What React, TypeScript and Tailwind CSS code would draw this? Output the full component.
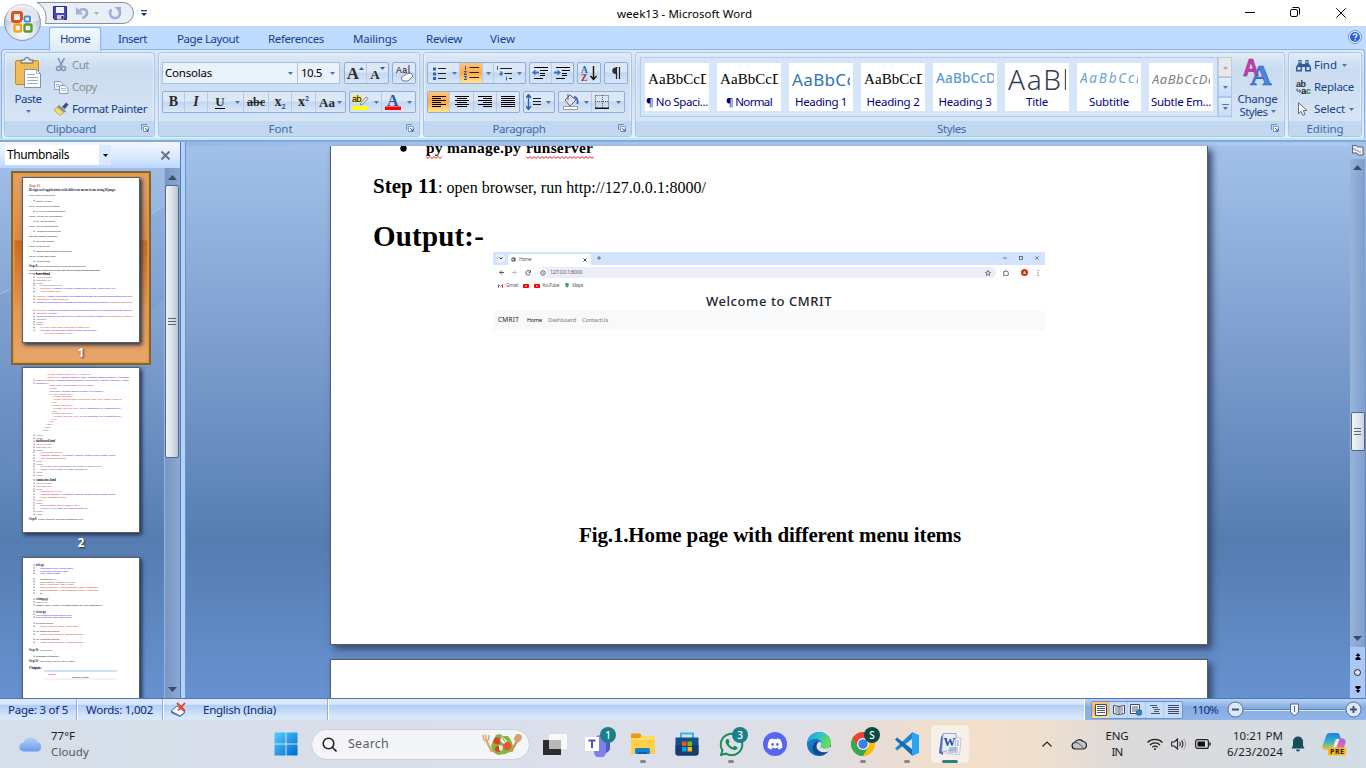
import React, { useLayoutEffect, useRef, useState } from "react";
import { FaDiscord, FaWhatsapp } from "react-icons/fa";

/* ---------- helpers ---------- */

// Text tracked so that it fills a given width.
function T({ w, className = "", children }: { w?: number; className?: string; children: string }) {
  const ref = useRef<HTMLSpanElement>(null);
  const [ls, setLs] = useState(0);
  useLayoutEffect(() => {
    if (w && ref.current) {
      const natural = ref.current.getBoundingClientRect().width;
      setLs((w - natural) / children.length);
    }
  }, []);
  return (
    <span ref={ref} className={"inline-block whitespace-pre " + className} style={{ letterSpacing: ls }}>
      {children}
    </span>
  );
}

function Ic({ w, h, className = "", children }: { w: number; h: number; className?: string; children: React.ReactNode }) {
  return (
    <svg width={w} height={h} viewBox={`0 0 ${w} ${h}`} className={"block shrink-0 " + className}>
      {children}
    </svg>
  );
}

const Arrow = ({ c = "#4a78b8", className = "" }: { c?: string; className?: string }) => (
  <Ic w={5} h={3} className={className}>
    <path d="M0 0h5L2.5 3z" fill={c} />
  </Ic>
);

/* ---------- title bar and tabs ---------- */

function Orb() {
  return (
    <svg width="38" height="38" viewBox="0 0 38 38" className="absolute left-[3px] top-[3px] z-10">
      <defs>
        <radialGradient id="orb" cx="50%" cy="75%" r="75%">
          <stop offset="0" stopColor="#ffffff" />
          <stop offset=".45" stopColor="#dfe6ef" />
          <stop offset=".8" stopColor="#b4c2d6" />
          <stop offset="1" stopColor="#e8eef6" />
        </radialGradient>
      </defs>
      <circle cx="19.5" cy="19.5" r="18" fill="url(#orb)" stroke="#8796ab" />
      <path d="M3 17a16.5 16.5 0 0 1 33 0c-8 3-25 3-33 0z" fill="#fff" opacity=".55" />
      <g fill="none" strokeLinejoin="round">
        <rect x="9.5" y="9.5" width="9" height="9" rx="1.5" stroke="#e0501c" strokeWidth="3" />
        <rect x="21.5" y="13.5" width="5.5" height="5" rx="1" stroke="#3f8fdc" strokeWidth="2" />
        <rect x="11.5" y="21.5" width="6.5" height="7" rx="1" stroke="#f2a51c" strokeWidth="2.4" />
        <rect x="21.5" y="21.5" width="7" height="7" rx="1" stroke="#5c9e2e" strokeWidth="2.4" />
      </g>
      <path d="M17 19.5h5M19.5 17v5" stroke="#fff" strokeWidth="1" />
    </svg>
  );
}

function TitleBar() {
  return (
    <div className="relative flex h-[26px] shrink-0 items-start bg-white">
      <svg width="100" height="24" viewBox="0 0 100 24" className="absolute left-[36px] top-[1px]">
        <path d="M1 1.5H87a10.500 10.500 0 0 1 0 21H9.500C11.500 12 8 5 1 1.500z" fill="#e9eff7" stroke="#8b9098" />
      </svg>
      <div className="relative flex h-[26px] items-center pl-[53px]">
        <Ic w={14} h={14}>
          <path d="M.5.5h13v13h-12l-1-1z" fill="#4a46b4" stroke="#2b2a80" />
          <path d="M3 1h8v6H3z" fill="#f2f4fb" />
          <path d="M4 9h7v4.500H4z" fill="#c9cbe6" />
          <path d="M8.500 10h2v3h-2z" fill="#25236e" />
        </Ic>
        <Ic w={14} h={14} className="ml-[8px]">
          <path d="M3.500 6c3-4.500 8.500-3 8.500 .8 0 2.500-2 4.200-4.500 5.200" fill="none" stroke="#9fb2d2" strokeWidth="2.600" />
          <path d="M1 1v7.500h7.500z" fill="#9fb2d2" />
        </Ic>
        <Arrow c="#a9b0ba" className="ml-[5px]" />
        <Ic w={14} h={14} className="ml-[9px]">
          <path d="M3.500 3.500a5 5 0 1 0 7 0" fill="none" stroke="#9fb2d2" strokeWidth="2.600" />
          <path d="M6.500 1h6.500v6.500z" fill="#9fb2d2" />
        </Ic>
        <Ic w={6} h={7} className="ml-[19px]">
          <path d="M0 0h6v1.200H0zM0 3h6L3 6z" fill="#1f3764" />
        </Ic>
      </div>
      <div className="ml-auto flex h-[26px] items-center pr-[20px]">
        <Ic w={10} h={10}><path d="M0 4.500h10" stroke="#000" /></Ic>
        <Ic w={10} h={10} className="ml-[35px] mt-[-2px]">
          <rect x=".5" y="2.500" width="7" height="7" rx="1.500" fill="none" stroke="#000" />
          <path d="M2.500.5h5.500a1.500 1.500 0 0 1 1.500 1.500v5.500" fill="none" stroke="#000" />
        </Ic>
        <Ic w={10} h={10} className="ml-[36px] mt-[-1px]"><path d="M.3.3l9.400 9.400M9.700.3L.3 9.700" stroke="#000" /></Ic>
      </div>
      <div className="absolute left-[617px] top-[5px] text-[11.500px] leading-[17px] text-black">
        <T w={135}>week13 - Microsoft Word</T>
      </div>
    </div>
  );
}

const TABS: [string, number, number][] = [
  ["Insert", 29, 17],
  ["Page Layout", 62, 30],
  ["References", 56, 29],
  ["Mailings", 44, 29],
  ["Review", 36, 29],
  ["View", 25, 28],
];

function Tabs() {
  return (
    <div className="flex h-[23px] shrink-0 items-start bg-[#bfdbff] text-[11.500px] leading-[22px] text-[#15428b]">
      <div className="relative z-10 ml-[49px] mt-[1px] flex h-[24px] w-[52px] justify-center rounded-t-[3px] border border-b-0 border-[#8fb6ea] bg-gradient-to-b from-[#f4f9ff] to-[#dfebf8] shadow-[0_0_2px_#9ad6ff]">
        <T w={30}>Home</T>
      </div>
      {TABS.map(([t, w, ml]) => (
        <div key={t} className="flex pt-[2px]" style={{ marginLeft: ml }}>
          <T w={w}>{t}</T>
        </div>
      ))}
      <Ic w={14} h={14} className="ml-auto mr-[4px] mt-[4px]">
        <circle cx="7" cy="7" r="6.500" fill="#e9f1fc" stroke="#6f93cf" />
        <circle cx="7" cy="7" r="5" fill="#2a62d8" />
        <path d="M5.200 5.600c0-2.400 3.700-2.300 3.700-.2 0 1.300-1.700 1.400-1.700 2.800M7.200 9.200v1.300" fill="none" stroke="#fff" strokeWidth="1.300" />
      </Ic>
    </div>
  );
}

/* ---------- ribbon ---------- */

function Group({ className, title, tw, launcher = true, children }: { className: string; title: string; tw: number; launcher?: boolean; children: React.ReactNode }) {
  return (
    <div className={"flex h-[85px] shrink-0 flex-col overflow-hidden rounded-[3px] border border-[#a9c6e8] bg-gradient-to-b from-[#dfeaf6] via-[#cbdcf0] via-20% to-[#d9e7f6] shadow-[inset_0_0_0_1px_#e6f0fa] " + className}>
      <div className="flex h-[68px]">{children}</div>
      <div className={"relative flex h-[15px] justify-center bg-[#c1d8f0] text-[11.500px] leading-[16px] text-[#3e6aaa] " + (launcher ? "pr-[17px]" : "")}>
        <T w={tw}>{title}</T>
        {launcher && (
          <Ic w={8} h={8} className="absolute right-[5px] top-[3px]">
            <path d="M.5 6V.5H6" fill="none" stroke="#6f8fbd" />
            <path d="M2.500 2.500h5v5h-5z" fill="#fff" stroke="#7d9cc6" />
            <path d="M4 4l3 3M7 4.500V7H4.500" stroke="#3d6aa8" fill="none" />
          </Ic>
        )}
      </div>
    </div>
  );
}

const Bar = ({ className, children }: { className: string; children: React.ReactNode }) => (
  <div className={"flex h-[22px] overflow-hidden rounded-[2px] border border-[#8eafda] bg-gradient-to-b from-[#dce8f6] from-45% via-[#c4d7ef] via-50% to-[#d9e7f7] " + className}>{children}</div>
);

const Cell = ({ className, on, sep = true, children }: { className: string; on?: boolean; sep?: boolean; children: React.ReactNode }) => (
  <div className={"flex h-full shrink-0 items-center justify-center " + (sep ? "border-r border-[#b5cbe8] " : "") + (on ? "bg-gradient-to-b from-[#fdc57c] via-[#fda848] to-[#ffe48f] " : "") + className}>
    {children}
  </div>
);

const Lines = ({ rows }: { rows: [number, number][] }) => (
  <Ic w={14} h={12}>
    {rows.map(([x, w], i) => (
      <rect key={i} x={x} y={i * 2} width={w} height="1" fill="#000" />
    ))}
  </Ic>
);

function Clipboard() {
  return (
    <Group className="w-[151px]" title="Clipboard" tw={50}>
      <div className="ml-[5px] flex w-[36px] flex-col items-center pt-[4px]">
        <Ic w={26} h={31}>
          <rect x=".5" y="3.500" width="23" height="24" rx="1.500" fill="#f0bb55" stroke="#c58a2c" />
          <path d="M6 6V3h3.500a2.500 2.500 0 0 1 5 0H18v3z" fill="#e8e8ea" stroke="#5e6069" />
          <path d="M9.500 12.500h12l4 4v14h-16z" fill="#fff" stroke="#7e93b4" />
          <path d="M21.500 12.500v4h4M12 17.500h8M12 20.500h11M12 23.500h11M12 26.500h11" fill="none" stroke="#9aadc9" />
        </Ic>
        <T w={27} className="mt-[3px] text-[11.500px] leading-[16px]">Paste</T>
        <Arrow className="mt-[3px]" />
      </div>
      <div className="ml-[8px] flex flex-col pt-[1px] text-[11.500px]">
        <div className="flex h-[22px] items-center text-[#8d8d8d]">
          <Ic w={15} h={14}>
            <path d="M4 0l4 8M10.500 0L6 8" stroke="#8497b5" strokeWidth="1.600" fill="none" />
            <circle cx="4.500" cy="10.500" r="2" fill="none" stroke="#8497b5" strokeWidth="1.500" />
            <circle cx="9.500" cy="10.500" r="2" fill="none" stroke="#8497b5" strokeWidth="1.500" />
          </Ic>
          <T w={17} className="ml-[3px]">Cut</T>
        </div>
        <div className="flex h-[22px] items-center text-[#8d8d8d]">
          <Ic w={15} h={13}>
            <path d="M.5.500h6l2 2v6h-8z" fill="#eef3fa" stroke="#8d9fbf" />
            <path d="M5.500 4.500h6l2.500 2.500v5.500H5.500z" fill="#f5f8fc" stroke="#8d9fbf" />
            <path d="M2 3.500h3M2 5.500h3M7 7.500h5M7 9.500h5" stroke="#a9b8d2" />
          </Ic>
          <T w={25} className="ml-[3px]">Copy</T>
        </div>
        <div className="flex h-[22px] items-center text-[#15428b]">
          <Ic w={15} h={14}>
            <path d="M8 5l4-4.500 2.500 2L11 7z" fill="#3c4f80" />
            <path d="M5 3.500L11.500 9 10 10.500 3.500 5z" fill="#9099b0" stroke="#545e7e" strokeWidth=".6" />
            <path d="M3.500 5L10 10.500 6 13.500 0 8z" fill="#f5dc70" stroke="#a98d30" strokeWidth=".7" />
          </Ic>
          <T w={75} className="ml-[3px]">Format Painter</T>
        </div>
      </div>
    </Group>
  );
}

const Serif = "font-['Liberation_Serif',serif] font-bold text-[#2a2a2a] leading-none ";

function FontGroup() {
  return (
    <Group className="w-[262px]" title="Font" tw={24}>
      <div className="flex flex-col gap-[7px] pl-[3px] pt-[9px]">
        <div className="flex h-[22px] text-[11.500px] text-black">
          <div className="flex w-[136px] items-center border border-[#abc1de] bg-[#eaf2fb] pl-[2px] pr-[4px]">
            <T w={47}>Consolas</T>
            <Arrow className="ml-auto" />
          </div>
          <div className="flex w-[42px] items-center border border-l-0 border-[#abc1de] bg-[#eaf2fb] pl-[3px] pr-[4px]">
            <T w={21}>10.5</T>
            <Arrow className="ml-auto" />
          </div>
          <Bar className="ml-[4px] w-[45px]">
            <Cell className="w-[22px]">
              <span className={Serif + "text-[17px]"}>A</span>
              <Ic w={5} h={3} className="mb-[10px]"><path d="M0 3h5L2.500 0z" fill="#2d5fa8" /></Ic>
            </Cell>
            <Cell className="w-[21px]" sep={false}>
              <span className={Serif + "mt-[3px] text-[13px]"}>A</span>
              <Arrow c="#2d5fa8" className="mb-[10px]" />
            </Cell>
          </Bar>
          <Bar className="ml-[3px] w-[24px]">
            <Cell className="w-[22px]" sep={false}>
              <Ic w={17} h={17}>
                <text x="0" y="7.500" fontSize="8.500" fontFamily="Liberation Sans, sans-serif" fill="#000" textLength="11">Aa</text>
                <path d="M13 0v9" stroke="#333" />
                <path d="M10 9l5-1 2 3-5 5H7l-2-3z" fill="#fff" stroke="#6b7391" />
              </Ic>
            </Cell>
          </Bar>
        </div>
        <div className="flex h-[22px]">
          <Bar className="w-[184px]">
            <Cell className="w-[22px]"><span className={Serif + "text-[14px]"}>B</span></Cell>
            <Cell className="w-[23px]"><span className={Serif + "text-[14px] italic"}>I</span></Cell>
            <Cell className="w-[24px]" sep={false}><span className={Serif + "border-b border-black text-[13px]"}>U</span></Cell>
            <Cell className="w-[12px]"><Arrow /></Cell>
            <Cell className="w-[25px]"><span className={Serif + "text-[12px] line-through"}>abc</span></Cell>
            <Cell className="w-[23px]">
              <span className={Serif + "text-[14px]"}>x</span>
              <span className="mt-[9px] text-[7px] font-bold leading-none text-[#2d5fa8]">2</span>
            </Cell>
            <Cell className="w-[24px]">
              <span className={Serif + "text-[14px]"}>x</span>
              <span className="mb-[8px] text-[7px] font-bold leading-none text-[#2d5fa8]">2</span>
            </Cell>
            <Cell className="w-[29px] gap-[2px]" sep={false}>
              <span className={Serif + "text-[13px]"}>Aa</span>
              <Arrow />
            </Cell>
          </Bar>
          <Bar className="ml-[3px] w-[67px]">
            <Cell className="w-[21px]" sep={false}>
              <Ic w={17} h={17}>
                <path d="M0 1h10v8H0z" fill="#ffe97a" />
                <text x="0" y="8" fontSize="9" fontFamily="Liberation Sans, sans-serif" fill="#000" textLength="9.500">ab</text>
                <path d="M9 9l5-6 2 1.500L11 10l-3 .8z" fill="#f2ede2" stroke="#777" strokeWidth=".8" />
                <path d="M0 12.500h16V16H0z" fill="#ff0" />
              </Ic>
            </Cell>
            <Cell className="w-[11px]"><Arrow /></Cell>
            <Cell className="w-[22px]" sep={false}>
              <Ic w={16} h={18}>
                <text x="2" y="12.500" fontSize="16" fontWeight="bold" fontFamily="Liberation Serif, serif" fill="#31549a">A</text>
                <path d="M0 13.500h16V17H0z" fill="#f00" />
              </Ic>
            </Cell>
            <Cell className="w-[11px]" sep={false}><Arrow /></Cell>
          </Bar>
        </div>
      </div>
    </Group>
  );
}

const Indent = ({ out }: { out?: boolean }) => (
  <Ic w={17} h={14}>
    <path d="M2 1.500h14M8 4.500h8M8 7.500h5M8 9.500h5M2 12.500h9" stroke="#000" strokeWidth="1.200" />
    <path d={out ? "M0 6.500l3.500-3v2H7v2H3.500v2z" : "M7 6.500l-3.500-3v2H0v2h3.500v2z"} fill="#3a6fc4" />
  </Ic>
);

function Paragraph() {
  return (
    <Group className="w-[209px]" title="Paragraph" tw={53}>
      <div className="flex flex-col gap-[7px] pl-[3px] pt-[9px]">
        <div className="flex h-[22px]">
          <Bar className="w-[99px]">
            <Cell className="w-[22px]" sep={false}>
              <Ic w={13} h={13}>
                <path d="M0 .500h3v3H0zM0 5.500h3v3H0zM0 10h3v3H0z" fill="#2d5fb4" />
                <path d="M5 1.500h8M5 6.500h8M5 11.500h8" stroke="#222" />
              </Ic>
            </Cell>
            <Cell className="w-[10px]"><Arrow /></Cell>
            <Cell className="w-[23px]" on>
              <Ic w={15} h={14}>
                <path d="M1.500 0v4M0 5.500h2.500L0 8.500h3M0 10.500h2.500l-1 1.500 1 1.500H0" fill="none" stroke="#2d4f94" />
                <path d="M5.500 1.500h9.500M5.500 6.500h9.500M5.500 11.500h9.500" stroke="#222" />
              </Ic>
            </Cell>
            <Cell className="w-[11px]"><Arrow /></Cell>
            <Cell className="w-[20px]" sep={false}>
              <Ic w={17} h={15}>
                <path d="M1.500 0v4M4 6h2v3H4v-1.500h2M10.500 11v3.500" fill="none" stroke="#2d5fb4" />
                <path d="M4 2.500h12M8.500 7.500H16M13 12.500h3" stroke="#222" />
              </Ic>
            </Cell>
            <Cell className="w-[11px]" sep={false}><Arrow /></Cell>
          </Bar>
          <Bar className="ml-[3px] w-[45px]">
            <Cell className="w-[22px]"><Indent out /></Cell>
            <Cell className="w-[21px]" sep={false}><Indent /></Cell>
          </Bar>
          <Bar className="ml-[3px] w-[24px]">
            <Cell className="w-[22px]" sep={false}>
              <Ic w={16} h={16}>
                <text x="0" y="7.500" fontSize="9.500" fontWeight="bold" fontFamily="Liberation Serif, serif" fill="#2d5fb4">A</text>
                <text x="0" y="15.500" fontSize="9.500" fontWeight="bold" fontFamily="Liberation Serif, serif" fill="#a02c3c">Z</text>
                <path d="M12.500 1v13M9.500 11l3 3.500 3-3.500" fill="none" stroke="#111" strokeWidth="1.400" />
              </Ic>
            </Cell>
          </Bar>
          <Bar className="ml-[3px] w-[24px]">
            <Cell className="w-[22px]" sep={false}>
              <Ic w={10} h={12}>
                <path d="M10 .5H4a3.300 3.300 0 0 0 0 6.500h1V0z" fill="#333" />
                <path d="M5.500 0v12M8.500 0v12" stroke="#222" strokeWidth="1.200" />
              </Ic>
            </Cell>
          </Bar>
        </div>
        <div className="flex h-[22px]">
          <Bar className="w-[93px]">
            <Cell className="w-[22px]" on><Lines rows={[[0, 14], [0, 9], [0, 14], [0, 9], [0, 14], [0, 9]]} /></Cell>
            <Cell className="w-[24px]"><Lines rows={[[0, 14], [2, 10], [0, 14], [2, 10], [0, 14], [2, 10]]} /></Cell>
            <Cell className="w-[23px]"><Lines rows={[[0, 14], [5, 9], [0, 14], [5, 9], [0, 14], [5, 9]]} /></Cell>
            <Cell className="w-[22px]" sep={false}><Lines rows={[[0, 14], [0, 14], [0, 14], [0, 14], [0, 14], [0, 14]]} /></Cell>
          </Bar>
          <Bar className="ml-[3px] w-[32px]">
            <Cell className="w-[18px]" sep={false}>
              <Ic w={15} h={16}>
                <path d="M2.500 1v14M0 4l2.500-3.500L5 4M0 12l2.500 3.500L5 12" fill="none" stroke="#2d5fb4" strokeWidth="1.400" />
                <path d="M7 4.500h8M7 7.500h8M7 10.500h8" stroke="#222" />
              </Ic>
            </Cell>
            <Cell className="w-[12px]" sep={false}><Arrow /></Cell>
          </Bar>
          <Bar className="ml-[3px] w-[67px]">
            <Cell className="w-[23px]" sep={false}>
              <Ic w={17} h={16}>
                <path d="M3 6l5-5 6 5-6 6z" fill="#dfe6f2" stroke="#5b6680" />
                <path d="M12 3c3 0 4 3 3.500 7" fill="none" stroke="#2d5fb4" strokeWidth="1.800" />
                <path d="M6 0v6" stroke="#555" />
                <path d="M1.500 12.500h14v3h-14z" fill="#fff" stroke="#999" />
              </Ic>
            </Cell>
            <Cell className="w-[10px]"><Arrow /></Cell>
            <Cell className="w-[20px]" sep={false}>
              <Ic w={14} h={14}>
                <path d="M.5.5h13v13M.5.5v13M7.500 0v13M0 6.500h13" fill="none" stroke="#555" strokeDasharray="1 1" />
                <path d="M0 13.300h14" stroke="#111" strokeWidth="1.400" />
              </Ic>
            </Cell>
            <Cell className="w-[12px]" sep={false}><Arrow /></Cell>
          </Bar>
        </div>
      </div>
    </Group>
  );
}

const STYLES: { s: string; sw: number; l: string; lw: number; c: string }[] = [
  { s: "AaBbCcD", sw: 63, l: "¶ No Spaci...", lw: 62, c: "font-['Liberation_Serif',serif] text-[15px] text-black" },
  { s: "AaBbCcD", sw: 63, l: "¶ Normal", lw: 46, c: "font-['Liberation_Serif',serif] text-[15px] text-black" },
  { s: "AaBbCc", sw: 63, l: "Heading 1", lw: 52, c: "text-[17px] text-[#2e74b5]" },
  { s: "AaBbCcD", sw: 63, l: "Heading 2", lw: 53, c: "font-['Liberation_Serif',serif] text-[15px] text-black" },
  { s: "AaBbCcD", sw: 60, l: "Heading 3", lw: 53, c: "text-[13.500px] font-medium text-[#5b9bd5]" },
  { s: "AaBb", sw: 73, l: "Title", lw: 22, c: "text-[28px] font-light text-[#323e4f]" },
  { s: "AaBbCcL", sw: 64, l: "Subtitle", lw: 40, c: "text-[13.500px] italic text-[#6aa4d9]" },
  { s: "AaBbCcDd", sw: 64, l: "Subtle Em...", lw: 60, c: "text-[13px] italic text-[#808080]" },
];

function StylesGroup() {
  return (
    <Group className="w-[650px]" title="Styles" tw={29}>
      <div className="ml-[4px] mt-[4px] flex h-[60px] w-[578px] gap-[8px] border border-[#b1cbea] bg-[#d4e6f8] pl-[4px] pt-[5px]">
        {STYLES.map((x) => (
          <div key={x.l} className="flex h-[48px] w-[64px] shrink-0 flex-col bg-white">
            <div className={"ml-[3px] mt-[2px] flex h-[28px] w-[58px] items-center overflow-hidden leading-none " + x.c}>
              <T w={x.sw}>{x.s}</T>
            </div>
            <div className="flex justify-center pt-[1px] text-[11.500px] leading-[16px] text-[#000080]">
              <T w={x.lw}>{x.l}</T>
            </div>
          </div>
        ))}
      </div>
      <div className="mt-[4px] flex h-[60px] w-[14px] flex-col">
        <div className="flex h-[20px] items-center justify-center border border-[#ccc] bg-[#e7e9ec]"><Ic w={5} h={3}><path d="M0 3h5L2.500 0z" fill="#a8acb2" /></Ic></div>
        <div className="flex h-[20px] items-center justify-center border border-[#aac6ea] bg-gradient-to-b from-[#e2eefc] to-[#c6dcf6]"><Arrow /></div>
        <div className="flex h-[20px] flex-col items-center justify-center gap-[2px] border border-[#aac6ea] bg-gradient-to-b from-[#e2eefc] to-[#c6dcf6]">
          <Ic w={7} h={1}><path d="M0 0h7v1H0z" fill="#4a78b8" /></Ic>
          <Arrow />
        </div>
      </div>
      <div className="flex w-[51px] flex-col items-center pt-[5px] text-[11.500px] leading-[13px] text-[#15428b]">
        <Ic w={30} h={28}>
          <text x="0" y="17.500" fontSize="24" fontWeight="bold" fontFamily="Liberation Sans, sans-serif" fill="#c040a8" stroke="#8c2080" strokeWidth=".5" textLength="16" lengthAdjust="spacingAndGlyphs">A</text>
          <text x="7" y="27" fontSize="30" fontWeight="bold" fontFamily="Liberation Serif, serif" fill="#4a86dc" stroke="#2c59a8" strokeWidth=".6">A</text>
        </Ic>
        <T w={40} className="mt-[6px]">Change</T>
        <div className="flex items-center gap-[3px]">
          <T w={28}>Styles</T>
          <Arrow />
        </div>
      </div>
    </Group>
  );
}

function Editing() {
  return (
    <Group className="w-[74px]" title="Editing" tw={37} launcher={false}>
      <div className="flex flex-col pl-[7px] pt-[1px] text-[11.500px] text-[#15428b]">
        <div className="flex h-[22px] items-center">
          <Ic w={15} h={13}>
            <path d="M2.500 1h3v3l1 1h2l1-1V1h3v3l2.500 4v4.500H9V8H6v4.500H0V8l2.500-4z" fill="#34599c" />
            <path d="M1.500 8h3v3h-3zM10.500 8h3v3h-3zM3.500 2h1v2h-1zM10.500 2h1v2h-1z" fill="#cfdcf2" />
          </Ic>
          <T w={23} className="ml-[3px]">Find</T>
          <Arrow className="ml-[5px]" />
        </div>
        <div className="flex h-[22px] items-center">
          <Ic w={15} h={15}>
            <text x="0" y="7" fontSize="9" fontWeight="bold" fontFamily="Liberation Sans, sans-serif" fill="#333" textLength="10">ab</text>
            <path d="M1 8.500V11h3M3 9.500L4.800 11 3 12.500" fill="none" stroke="#2d5fb4" />
            <text x="5" y="14" fontSize="9.500" fontWeight="bold" fontFamily="Liberation Sans, sans-serif" fill="#222" textLength="10"><tspan>a</tspan><tspan fill="#1f8a2c">c</tspan></text>
          </Ic>
          <T w={40} className="ml-[3px]">Replace</T>
        </div>
        <div className="flex h-[22px] items-center">
          <Ic w={15} h={14}><path d="M2.500.8v11l2.700-2.500 1.800 4 2-.9-1.700-3.900H11z" fill="#fff" stroke="#5f6b84" /></Ic>
          <T w={31} className="ml-[3px]">Select</T>
          <Arrow className="ml-[4px]" />
        </div>
      </div>
    </Group>
  );
}

/* ---------- thumbnails ---------- */

type Seg = [number, number, number, string, string, number?]; // x1, x2, baseline y, text, colour, bold
const K = "#444", P = "#5a46f0", R = "#e0504c", M = "#a85a6c";

const PAGE1: Seg[] = [
  [29, 40, 186.5, "Step-13", "#b45a48", 1],
  [29, 115, 190.6, "Design web application with different menu items using Django", "#1d1d3c", 1],
  [29, 55, 196.4, "Step1: Install Python version", K], [36, 52, 201.5, "python --version", K],
  [29, 60, 206.5, "Step2: Create virtual environment", K], [36, 65, 212.4, "py -m venv myworldenvironment", K],
  [29, 62, 217.4, "Step3: Activate the environment", K], [36, 55, 222.4, "py -m pip install", K],
  [29, 58, 227.4, "Step4: go to environment", K], [36, 61, 232.4, "..\\myworld\\Scripts\\activate", K],
  [29, 57, 237.4, "Step5: Install Django", K], [36, 54, 242.4, "pip install Django", K],
  [29, 50, 247.4, "Step6: Create project", K], [36, 72, 252.2, "django-admin startproject myproject", K],
  [29, 56, 257.4, "Step7: create app Home", K], [36, 50, 262.2, "cd myproject", K],
  [29, 38, 267.4, "Step 8:", "#222", 1], [38, 86, 267.4, "create templates/menu1 views and templates files", K],
  [29, 100, 271.3, "Open myproject/menu then create base.html menu.html and dashboard.html", "#222"],
  [29, 47, 273.7, "files.html", K], [36, 50, 275.4, "base.html", "#111", 1],
  [36, 52, 278.3, "<!DOCTYPE html>", M], [36, 52, 281.4, '<html lang="en">', M], [36, 43, 284.4, "<head>", M],
  [40, 63, 286.4, '<meta charset="UTF-8">', M],
  [40, 52, 289.4, "<meta name=", R], [52, 116, 289.4, '"viewport" content="width=device-width, initial-scale=1.0"', P],
  [40, 62, 292.4, "<title>Home</title>", R],
  [36, 47, 297.4, "<link href=", R], [47, 133, 297.4, '"https://cdn.jsdelivr.net/npm/bootstrap@5.0.2/dist/css/bootstrap.min.css"', P],
  [37, 69, 300.4, 'integrity="stylesheet"', R], [36, 109, 303.4, '"sha384-EVSTQN3/azprG1Anm3QDgpJLIm9Nao0Yz1ztcQTwFspd3yD"', P], [109, 133, 303.4, 'crossorigin="anonymous"', R],
  [36, 48, 311.4, "<script src=", R], [48, 133, 311.4, '"https://cdn.jsdelivr.net/npm/bootstrap@5.0.2/dist/js/bundle.min.js"', P],
  [37, 58, 314.4, 'integrity="sha384"', M], [36, 107, 317.4, '"sha384-MrcW6ZMFYlzcLA8Nl+NtUVF0sA7MsXsP1UyJoMp4YLEuNSfAP"', P], [107, 133, 317.4, 'crossorigin="anon"', R],
  [36, 47, 320.4, "</script>", M], [36, 43, 322.9, "</head>", M], [36, 43, 325.4, "<body>", M],
  [40, 90, 328.4, '<h1 class="text-center">Welcome to CMRIT</h1>', R],
  [40, 97, 331.2, '<nav class="navbar navbar-expand-lg navbar-light bg-light">', P],
  [44, 74, 333.9, '<div class="container-fluid">', R],
];

const PAGE2: Seg[] = [
  [47, 91, 375.3, '<a class="navbar-brand" href="#">CMRIT</a>', R],
  [47, 60, 378.3, "<button class=", R], [60, 130, 378.3, '"navbar-toggler" type="button" data-bs-toggle="collapse"', P],
  [36, 55, 381.2, "data-bs-target", R], [55, 129, 381.2, '"#navbarSupportedContent" aria-controls="navbar" aria-label="Toggle', P],
  [36, 49, 384.2, 'navigation">', P], [49, 94, 386.3, '<span class="navbar-toggler-icon"></span>', M],
  [49, 57, 389.3, "</button>", M], [49, 104, 392, '<div class="collapse navbar-collapse" id="navbar">', P],
  [49, 73, 395, '<ul class="navbar-nav">', R], [52, 73, 397.3, '<li class="nav-item">', R],
  [53, 122, 400.2, '<a class="nav-link active" aria-current="page" href="/home">Home</a>', R], [51, 57, 403, "</li>", M],
  [51, 73, 406.2, '<li class="nav-item">', R], [53, 79, 409.2, '<a class="nav-link" href=', R], [79, 121, 409.2, '"{% url \'dashboard\' %}">Dashboard</a>', P], [51, 57, 412, "</li>", M],
  [51, 73, 414.2, '<li class="nav-item">', R], [53, 79, 417.2, '<a class="nav-link" href=', R], [79, 121, 417.2, '"{% url \'contactus\' %}">ContactUs</a>', P], [51, 57, 420, "</li>", M],
  [49, 54, 422.3, "</ul>", M], [46, 53, 425.3, "</div>", M], [44, 51, 428.3, "</div>", M], [42, 49, 431, "</nav>", M],
  [36, 43, 436.3, "</body>", M], [36, 43, 439.3, "</html>", M],
  [36, 55, 442.3, "dashboard.html", "#111", 1], [36, 52, 445.3, "<!DOCTYPE html>", M], [36, 52, 448.3, '<html lang="en">', M], [36, 43, 451.3, "<head>", M],
  [40, 63, 453.3, '<meta charset="UTF-8">', R], [40, 62, 456.3, "<meta name=", R], [62, 116, 456.3, '"viewport" content="width=device-width, initial"', P],
  [40, 67, 459.3, "<title>Dashboard</title>", R], [36, 43, 462, "</head>", M], [36, 43, 465, "<body>", M],
  [40, 102, 467.3, "<h1>This is my dashboard, welcome to CMRIT</h1>", M], [40, 88, 470.3, "<a href=\"{% url 'home' %}\">Back to home</a>", P],
  [36, 43, 473.3, "</body>", M], [36, 43, 476.3, "</html>", M],
  [36, 56, 481, "contactus.html", "#111", 1], [36, 52, 484.3, "<!DOCTYPE html>", M], [36, 52, 487.3, '<html lang="en">', M], [36, 43, 490.3, "<head>", M],
  [40, 63, 492.3, '<meta charset="UTF-8">', R], [40, 62, 495.3, "<meta name=", R], [62, 116, 495.3, '"viewport" content="width=device-width, initial"', P],
  [40, 67, 498.3, "<title>Contact</title>", R], [36, 43, 501, "</head>", M], [36, 43, 504, "<body>", M],
  [40, 80, 506.3, "<h1>Contact us at CMRIT</h1>", M], [40, 88, 509.3, "<a href=\"{% url 'home' %}\">Back to home</a>", P],
  [36, 43, 512.3, "</body>", M], [36, 43, 515.3, "</html>", M],
  [29, 37, 520.3, "Step 9:", "#222", 1], [38, 83, 520.3, "create views.py, urls and settings.py files", K],
];

const PAGE3: Seg[] = [
  [36, 44, 566, "urls.py", "#111", 1], [40, 73, 569.1, "from django.contrib import admin", P], [40, 68, 571.7, "from django.urls import path", P], [40, 60, 574.3, "from . import views", P],
  [40, 56, 580.1, "urlpatterns = [", K], [40, 76, 582.7, "path('admin/', admin.site.urls),", "#6a8a4c"], [40, 75, 585.3, "path('', views.home, name='home'),", R],
  [40, 99, 588.3, "path('dashboard/', views.dashboard, name='dashboard'),", R], [40, 99, 591.3, "path('contactus/', views.contactus, name='contactus'),", R], [40, 42, 594.2, "]", K],
  [36, 48, 600.2, "settings.py", "#111", 1], [36, 47, 603, "import os", "#6a8a4c"], [36, 102, 606, "TEMPLATES = {'DIRS': [os.path.join(BASE_DIR,'templates')]", "#333"],
  [36, 46, 613, "views.py", "#111", 1], [36, 72, 615.5, "from django.shortcuts import render", P], [36, 72, 618.3, "from django.http import HttpResponse", P],
  [36, 54, 624.3, "def home(request):", K], [40, 79, 627.4, "return render(request, 'home.html')", R],
  [36, 60, 632.4, "def dashboard(request):", K], [40, 84, 635.4, "return render(request, 'dashboard.html')", R],
  [36, 60, 640.4, "def contactus(request):", K], [40, 84, 643.4, "return render(request, 'contactus.html')", R],
  [29, 39, 651.2, "Step 10:", "#222", 1], [40, 52, 651.2, "run the server", K], [36, 59, 657.4, "py manage.py runserver", "#222"],
  [29, 39, 662, "Step 11:", "#222", 1], [40, 75, 662, "open browser, run http://127.0.0.1:8000/", K],
];

function MiniPage({ y, h, segs, children }: { y: number; h: number; segs: Seg[]; children?: React.ReactNode }) {
  return (
    <div className="w-[118px] border border-[#5c5c5c] bg-white shadow-[2px_2px_4px_#1f3050]">
      <svg width="116" height={h} viewBox={`23 ${y} 116 ${h}`} className="block">
        {segs.map(([x1, x2, by, t, c, b], i) => (
          <g key={i} opacity={b ? 1 : 0.9}>
            {x1 >= 36 && x1 <= 40 && <rect x={33.5} y={by - 1.7} width="1.2" height="1.2" fill="#667" />}
            <text x={x1} y={by} fontSize={b ? 3.2 : 2.4} fontWeight="bold" fontFamily={b ? "Liberation Serif, serif" : "Liberation Sans, sans-serif"} fill={c} textLength={x2 - x1} lengthAdjust="spacingAndGlyphs">{t}</text>
          </g>
        ))}
        {children}
      </svg>
    </div>
  );
}

const PageNo = ({ children }: { children: string }) => (
  <div className="w-[118px] text-center text-[12px] font-bold leading-[16px] text-white [text-shadow:1px_1px_2px_#333]">{children}</div>
);

function Thumbnails() {
  return (
    <div className="flex w-[180px] shrink-0 flex-col">
      <div className="flex h-[26px] shrink-0 items-center bg-gradient-to-b from-[#f3f8ff] via-[#deebff] to-[#bbd6ff] text-[12px] text-black">
        <div className="ml-[5px] flex h-[20px] w-[106px] items-center bg-white pl-[2px]">
          <T w={62}>Thumbnails</T>
          <div className="ml-auto flex h-full w-[12px] items-center justify-center bg-[#d9e9ff]"><Arrow c="#000" /></div>
        </div>
        <Ic w={9} h={9} className="ml-[50px]"><path d="M.5.5l8 8M8.500.5l-8 8" stroke="#6d7480" strokeWidth="2" /></Ic>
      </div>
      <div className="flex h-[530px]">
        <div className="relative flex w-[164px] flex-col overflow-hidden">
          <svg width="164" height="530" viewBox="0 0 164 530" className="absolute left-0 top-0">
            <path d="M0 126Q90 88 164 38V130Q60 240 0 300z" fill="#5d85c4" opacity=".13" />
            <path d="M0 126Q90 88 164 38" fill="none" stroke="#c8dcf6" opacity=".5" />
          </svg>
          <div className="relative ml-[11px] mt-[3px] flex h-[194px] w-[140px] shrink-0 flex-col border-2 border-[#7c6544] bg-[linear-gradient(180deg,#e3a26a_0%,#d98a46_35%,#cd6c20_36%,#e29857_72%,#e7a66e_100%)] pl-[9px] pt-[4px] shadow-[inset_0_0_0_1.500px_#f29a1f]">
            <MiniPage y={178} h={164} segs={PAGE1} />
            <div className="mt-[2px]"><PageNo>1</PageNo></div>
          </div>
          <div className="relative ml-[22px] mt-[2px] shrink-0">
            <MiniPage y={368} h={164} segs={PAGE2} />
            <div className="mt-[2px]"><PageNo>2</PageNo></div>
          </div>
          <div className="relative ml-[22px] mt-[6px] shrink-0">
            <MiniPage y={558} h={166} segs={PAGE3}>
              <text x="29" y="669" fontSize="4.500" fontWeight="bold" fontFamily="Liberation Serif, serif" fill="#333" textLength="13">Output:-</text>
              <rect x="44" y="670" width="73" height="2" fill="#cfe0fb" />
              <rect x="44" y="678" width="73" height="2" fill="#f3f4f6" />
              <path d="M48 674.500h8" stroke="#e88" strokeWidth=".8" />
              <text x="72" y="677.500" fontSize="2.200" fontWeight="bold" fontFamily="Liberation Sans, sans-serif" fill="#333" textLength="17" lengthAdjust="spacingAndGlyphs">Welcome to CMRIT</text>
            </MiniPage>
          </div>
        </div>
        <div className="flex w-[16px] flex-col items-center bg-gradient-to-r from-[#a6c0e2] via-[#7897c4] via-10% to-[#8aa9d4]">
          <Ic w={9} h={5} className="mt-[7px]"><path d="M0 5h9L4.500 0z" fill="#3a4c6c" /></Ic>
          <div className="mt-[5px] flex h-[273px] w-[14px] shrink-0 flex-col items-center justify-center gap-[2px] rounded-[2px] border border-[#52678c] bg-gradient-to-r from-[#eef1f6] via-[#dde2ea] to-[#b9c2d0]">
            {[0, 1, 2].map((i) => <div key={i} className="h-px w-[8px] bg-[#5c6676]" />)}
          </div>
          <Ic w={9} h={5} className="mb-[6px] mt-auto"><path d="M0 0h9L4.500 5z" fill="#3a4c6c" /></Ic>
        </div>
      </div>
    </div>
  );
}

/* ---------- document ---------- */

function BrowserShot() {
  return (
    <div className="ml-[162px] flex h-[78px] w-[552px] flex-col bg-white font-['Noto_Sans',sans-serif] text-[5px] leading-none text-[#666]">
      <div className="flex h-[13px] items-end bg-[#d3e3fd]">
        <div className="mb-[2px] ml-[3px] flex h-[9px] w-[9px] items-center justify-center rounded-[3px] bg-[#e8f0fe]"><Ic w={4} h={3}><path d="M.5.5L2 2 3.500.5" fill="none" stroke="#333" /></Ic></div>
        <div className="ml-[3px] flex h-[11px] w-[83px] items-center rounded-t-[3px] bg-white pl-[3px] pr-[4px]">
          <Ic w={5} h={5}><circle cx="2.500" cy="2.500" r="2.300" fill="#5f6368" /><path d="M1 2l2 1" stroke="#fff" /></Ic>
          <T w={12} className="ml-[3px]">Home</T>
          <Ic w={4} h={4} className="ml-auto"><path d="M.5.5l3 3M3.500.5l-3 3" stroke="#333" strokeWidth=".9" /></Ic>
        </div>
        <Ic w={4} h={4} className="mb-[5px] ml-[6px]"><path d="M2 0v4M0 2h4" stroke="#555" strokeWidth=".8" /></Ic>
        <div className="mb-[5px] ml-auto mr-[6px] flex items-center gap-[12px]">
          <Ic w={4} h={4}><path d="M0 2h4" stroke="#555" strokeWidth=".8" /></Ic>
          <Ic w={4} h={4}><rect x=".5" y=".5" width="3" height="3" fill="none" stroke="#555" strokeWidth=".8" /></Ic>
          <Ic w={4} h={4}><path d="M.3.3l3.400 3.400M3.700.3L.3 3.700" stroke="#555" strokeWidth=".7" /></Ic>
        </div>
      </div>
      <div className="flex h-[15px] items-center pl-[6px] pr-[6px]">
        <Ic w={5} h={5}><path d="M5 2.500H.8M2.800.5l-2 2 2 2" fill="none" stroke="#444" strokeWidth=".9" /></Ic>
        <Ic w={5} h={5} className="ml-[8px]"><path d="M0 2.500h4.200M2.200.5l2 2-2 2" fill="none" stroke="#aaa" strokeWidth=".8" /></Ic>
        <Ic w={6} h={6} className="ml-[8px]"><path d="M5 1.500a2.300 2.300 0 1 0 .3 2M5.500.3v2h-2" fill="none" stroke="#444" strokeWidth=".9" /></Ic>
        <div className="ml-[6px] flex h-[11px] w-[459px] shrink-0 items-center rounded-full bg-[#ebeef8] pl-[1px] pr-[5px]">
          <span className="flex h-[9px] w-[9px] items-center justify-center rounded-full bg-white"><Ic w={6} h={6}><circle cx="3" cy="3" r="2.300" fill="none" stroke="#444" strokeWidth=".8" /><path d="M3 1.700v2.500" stroke="#444" strokeWidth=".7" /></Ic></span>
          <T w={32} className="ml-[3px] text-[5.500px]">127.0.0.1:8000</T>
          <Ic w={6} h={6} className="ml-auto"><path d="M3 .5l.8 1.700 1.800.2-1.300 1.200.3 1.800L3 4.500l-1.600.9.3-1.800L.4 2.400l1.800-.2z" fill="none" stroke="#444" strokeWidth=".7" /></Ic>
        </div>
        <Ic w={6} h={6} className="ml-auto"><path d="M.5 1.500h1.800V.6h1v.9H5v1.700h.7v1H5v1.300H.5V4h.7V3H.5z" fill="none" stroke="#555" strokeWidth=".7" /></Ic>
        <div className="ml-[12px] h-[7px] w-[7px] rounded-full bg-[#c5330f] text-center text-[4px] leading-[7px] text-white">A</div>
        <Ic w={2} h={6} className="ml-[9px]"><path d="M.5 0h1v1h-1zM.5 2.500h1v1h-1zM.5 5h1v1h-1z" fill="#444" /></Ic>
      </div>
      <div className="flex h-[11px] items-center pl-[5px]">
        <Ic w={5} h={4}><path d="M.5 4V.7l2 1.800 2-1.800V4" fill="none" stroke="#e94235" strokeWidth="1" /><path d="M.5 4V1.500" stroke="#4285f4" /></Ic>
        <T w={12} className="ml-[3px]">Gmail</T>
        <Ic w={6} h={4} className="ml-[5px]"><rect width="6" height="4" rx="1" fill="#f00" /><path d="M2.400 1l1.800 1-1.800 1z" fill="#fff" /></Ic>
        <Ic w={6} h={4} className="ml-[5px]"><rect width="6" height="4" rx="1" fill="#f00" /><path d="M2.400 1l1.800 1-1.800 1z" fill="#fff" /></Ic>
        <T w={17} className="ml-[2px]">YouTube</T>
        <Ic w={4} h={5} className="ml-[6px]"><path d="M2 0a2 2 0 0 1 2 2L2 5 0 2a2 2 0 0 1 2-2z" fill="#34a853" /><path d="M0 2a2 2 0 0 1 2-2v2z" fill="#4285f4" /></Ic>
        <T w={11} className="ml-[3px]">Maps</T>
      </div>
      <div className="flex h-[20px] items-center justify-center text-[13px] font-medium text-[#212529]"><T w={126}>Welcome to CMRIT</T></div>
      <div className="flex h-[19px] items-center bg-[#f8f9fb] pl-[5px] text-[5.500px]">
        <T w={21} className="text-[6.500px] text-[#222]">CMRIT</T>
        <T w={15} className="ml-[8px] text-[#111]">Home</T>
        <T w={28} className="ml-[6px] text-[#777]">Dashboard</T>
        <T w={26} className="ml-[6px] text-[#777]">ContactUs</T>
      </div>
    </div>
  );
}

function Squiggle({ w }: { w: number }) {
  const d = Array.from({ length: Math.floor(w / 4) }, () => "l2 2l2-2").join("");
  return <Ic w={w} h={4}><path d={"M0 .5" + d} fill="none" stroke="#e00000" strokeWidth=".9" /></Ic>;
}

function DocArea() {
  return (
    <div className="flex min-w-0 flex-1 flex-col overflow-hidden">
      <div className="h-[4px] shrink-0 bg-gradient-to-r from-[#98b7e3] to-[#abc8f0] to-25%" />
      <div className="ml-[144px] flex h-[499px] w-[878px] shrink-0 flex-col overflow-hidden border border-t-0 border-[#5c5c5c] bg-white font-['Liberation_Serif',serif] text-black shadow-[4px_4px_7px_#33496c]">
        <div className="flex h-[12px] font-bold">
          <Ic w={7} h={6} className="ml-[69px]"><circle cx="3.500" cy="2.500" r="3.200" fill="#000" /></Ic>
          <div className="ml-[19px] mt-[-6px]">
            <div className="flex h-[16px] items-center text-[15.500px]">
              <T w={95}>py manage.py</T>
              <T w={67} className="ml-[5px]">runserver</T>
            </div>
            <div className="flex"><Squiggle w={18} /><span className="w-[82px]" /><Squiggle w={68} /></div>
          </div>
        </div>
        <div className="ml-[42px] mt-[13px] flex h-[25px] items-baseline">
          <T w={65} className="text-[21px] font-bold">Step 11</T>
          <T w={268} className="text-[16px]">: open browser, run http://127.0.0.1:8000/</T>
        </div>
        <div className="ml-[42px] mt-[20px] flex h-[36px] items-center">
          <T w={111} className="pt-[4px] text-[29px] font-bold leading-none">Output:-</T>
        </div>
        <BrowserShot />
        <div className="mt-[191px] flex justify-center pl-[2px] text-[21px] font-bold leading-[28px]">
          <T w={382}>Fig.1.Home page with different menu items</T>
        </div>
      </div>
      <div className="ml-[144px] mt-[14px] h-[60px] w-[878px] shrink-0 border border-[#5c5c5c] bg-white shadow-[4px_4px_7px_#33496c]" />
    </div>
  );
}

function VScroll() {
  return (
    <div className="mr-[1px] flex w-[15px] shrink-0 flex-col items-center">
      <Ic w={13} h={12} className="mt-[2px]">
        <path d="M1.500 1.500h4l1 1.500h5.500v8h-5l-1-2H1.500z" fill="#eef3fb" stroke="#555" strokeWidth=".9" />
        <path d="M3 4v2M5 5v2M7 6v2M9 7v2" stroke="#667" strokeWidth=".8" />
      </Ic>
      <div className="mt-[3px] flex h-[488px] w-full flex-col items-center bg-gradient-to-r from-[#98b4da] to-[#7f9ecb]">
        <Ic w={9} h={5} className="mt-[6px]"><path d="M0 5h9L4.500 0z" fill="#3a4c6c" /></Ic>
        <div className="mt-[242px] flex h-[39px] w-[14px] shrink-0 flex-col items-center justify-center gap-[2px] rounded-[2px] border border-[#52678c] bg-gradient-to-r from-[#f4f6fa] to-[#ccd4e0]">
          {[0, 1, 2].map((i) => <div key={i} className="h-px w-[7px] bg-[#5c6676]" />)}
        </div>
        <Ic w={9} h={5} className="mb-[6px] mt-auto"><path d="M0 0h9L4.500 5z" fill="#3a4c6c" /></Ic>
      </div>
      <div className="flex h-[51px] w-full flex-col items-center bg-[#aac7f5]">
        <Ic w={6} h={7} className="mt-[6px]"><path d="M3 0l2.500 3h-5zM3 3l3 3H0zM.5 6h5v1h-5z" fill="#000" /></Ic>
        <Ic w={7} h={7} className="mt-[9px]"><circle cx="3.500" cy="3.500" r="3" fill="#dfe3ea" stroke="#222" /></Ic>
        <Ic w={6} h={7} className="mt-[10px]"><path d="M3 7l2.500-3h-5zM3 4l3-3H0zM.5 0h5v1h-5z" fill="#000" /></Ic>
      </div>
    </div>
  );
}

/* ---------- status bar ---------- */

const Sep = ({ className = "" }: { className?: string }) => <div className={"h-full w-[2px] border-l border-r border-l-[#8fb0de] border-r-white " + className} />;

function StatusBar() {
  const ink = "#3d4a60";
  return (
    <div className="flex h-[22px] shrink-0 items-center border-t border-[#5077a8] bg-gradient-to-b from-[#d9e8fc] from-25% via-[#b0cef4] via-30% to-[#d8e7fb] to-85% text-[11.500px] leading-[20px] text-[#15428b]">
      <T w={60} className="ml-[8px] text-[#0a2a72]">Page: 3 of 5</T>
      <Sep className="ml-[8px]" />
      <T w={67} className="ml-[8px] text-[#0a2a72]">Words: 1,002</T>
      <Sep className="ml-[9px]" />
      <Ic w={17} h={15} className="ml-[6px]">
        <path d="M1 9l6-5 8 6-5 4z" fill="#fff" stroke="#53617f" />
        <path d="M1 9v2l9 4 5-4v-1l-5 4z" fill="#5474b8" />
        <path d="M7 1l8 8M15 1L8 8.500" stroke="#e8402a" strokeWidth="1.800" />
      </Ic>
      <T w={73} className="ml-[16px] text-[#0a2a72]">English (India)</T>
      <Sep className="ml-[51px]" />
      <div className="ml-auto flex h-full w-[282px] items-center border-l border-white bg-gradient-to-b from-[#b9d3f6] via-[#86ace0] via-40% to-[#8fb5ea]">
        <div className="ml-[6px] flex h-[18px] w-[92px] rounded-[2px] border border-[#6f93c8] bg-[#c6dbf6]">
          <Cell className="w-[18px]" on><Ic w={12} h={12}><path d="M.5.5h11v11H.5z" fill="#fff" stroke={ink} /><path d="M2 2.500h8M2 4.500h8M2 6.500h8M2 8.500h8" stroke={ink} strokeWidth=".9" /></Ic></Cell>
          <Cell className="w-[18px]"><Ic w={12} h={11}><path d="M.5 1.500L6 2.500l5.500-1v8L6 10.500.5 9.500zM6 2.500v8" fill="#fff" stroke={ink} /><path d="M2 4h3M2 6h3M7 4h3M7 6h3M2 8h3M7 8h3" stroke={ink} strokeWidth=".8" /></Ic></Cell>
          <Cell className="w-[18px]"><Ic w={13} h={12}><path d="M.5.5h9v9H.5z" fill="#fff" stroke={ink} /><path d="M2 3h6M2 5h6M2 7h4" stroke={ink} strokeWidth=".9" /><circle cx="9" cy="8.500" r="3.200" fill="#2f74c8" /><path d="M7.500 7.500l2 .5 1 2" stroke="#43a047" strokeWidth="1.400" fill="none" /></Ic></Cell>
          <Cell className="w-[18px]"><Ic w={10} h={10}><path d="M0 .5h7M2 2.500h6M4 4.500h6M4 6.500h5M1 8.500h9" stroke={ink} strokeWidth=".9" /></Ic></Cell>
          <Cell className="w-[18px]" sep={false}><Ic w={11} h={10}><path d="M0 .5h11M0 2.500h11M0 4.500h11M0 6.500h11M0 8.500h11" stroke={ink} strokeWidth="1" /></Ic></Cell>
        </div>
        <T w={26} className="ml-[9px] text-[#0f2f80]">110%</T>
        <Ic w={17} h={17} className="ml-[9px]">
          <circle cx="8.500" cy="8.500" r="7.500" fill="#dbe8fa" stroke="#5d6f90" /><path d="M5 8.500h7" stroke="#44546e" strokeWidth="2" />
        </Ic>
        <Ic w={101} h={14}>
          <path d="M0 7.500h101" stroke="#dfeafb" strokeWidth="1" /><path d="M0 6.500h101" stroke="#5d80b5" strokeWidth="1" />
          <path d="M46.500 1h8v8l-4 4-4-4z" fill="#eef4fd" stroke="#53678c" /><path d="M50.500 3v6" stroke="#53678c" />
        </Ic>
        <Ic w={17} h={17}>
          <circle cx="8.500" cy="8.500" r="7.500" fill="#dbe8fa" stroke="#5d6f90" /><path d="M5 8.500h7M8.500 5v7" stroke="#44546e" strokeWidth="2" />
        </Ic>
      </div>
    </div>
  );
}

/* ---------- taskbar ---------- */

const Pinned = ({ run, children }: { run?: boolean; children: React.ReactNode }) => (
  <div className="relative flex h-[48px] w-[44px] shrink-0 items-center justify-center">
    {children}
    {run && <div className="absolute bottom-[5px] left-[19px] h-[3px] w-[6px] rounded-full bg-[#858585]" />}
  </div>
);

const Badge = ({ children, className = "bg-[#1f7f88]" }: { children: string; className?: string }) => (
  <div className={"absolute left-[23px] top-[7px] h-[16px] w-[16px] rounded-full text-center text-[10px] font-medium leading-[16px] text-white " + className}>{children}</div>
);

function Taskbar() {
  return (
    <div className="flex h-[48px] shrink-0 items-center bg-[linear-gradient(90deg,#d6dfe9_0,#d9dfeb_35%,#dbdfea_46%,#dedfe6_60%,#eaddd4_65%,#f2e0cb_71%,#f0dfce_76%,#dcdadb_82%,#d2dde5_100%)] text-[12px] text-[#1b1b1b]">
      <Ic w={24} h={16} className="ml-[19px]">
        <defs><linearGradient id="cl" x1="0" y1="0" x2="0" y2="1"><stop offset="0" stopColor="#b4d0fb" /><stop offset="1" stopColor="#6c9bea" /></linearGradient></defs>
        <path d="M5 15.500a4.500 4.500 0 0 1-.5-9 7.500 7.500 0 0 1 14-.5 5 5 0 0 1 .5 9.500z" fill="url(#cl)" />
      </Ic>
      <div className="ml-[8px] flex w-[223px] flex-col items-start text-[11.500px] leading-[16px]">
        <T w={24}>77°F</T>
        <T w={38} className="text-[#555]">Cloudy</T>
      </div>
      <Ic w={24} h={24}>
        <defs><linearGradient id="win" x1="0" y1="0" x2="1" y2="1"><stop offset="0" stopColor="#4fd0ff" /><stop offset="1" stopColor="#0069cc" /></linearGradient></defs>
        <path d="M.5.5h11v11H.5zM12.500.5h11v11h-11zM.5 12.500h11v11H.5zM12.500 12.500h11v11h-11z" fill="url(#win)" />
      </Ic>
      <div className="ml-[13px] flex h-[31px] w-[219px] items-center rounded-full border border-[#ccd0d8] bg-[#f3f5f9] pl-[10px] pr-[7px] text-[#5d5d5d]">
        <Ic w={15} h={15}><circle cx="6.500" cy="6.500" r="5.300" fill="none" stroke="#222" strokeWidth="1.600" /><path d="M10.500 10.500l4 4" stroke="#222" strokeWidth="1.600" /></Ic>
        <T w={41} className="ml-[11px] text-[12.500px]">Search</T>
        <Ic w={40} h={22} className="ml-auto">
          <path d="M4 7l6 12" stroke="#dda877" strokeWidth="2.400" />
          <path d="M1 2l1 5 3 1 2-2-.5-4M3.500 1.500l.8 5" fill="none" stroke="#dda877" strokeWidth="1.500" />
          <path d="M35 8l-6 11" stroke="#c98f5c" strokeWidth="2.400" />
          <ellipse cx="36" cy="5" rx="3.600" ry="4.200" transform="rotate(30 36 5)" fill="#d9a06c" />
          <path d="M9 13l2-5 3-6 4-1 3 2 5 0 3 4 2 6-3 6-5 2-7 1-5-3z" fill="#86b63c" />
          <circle cx="15" cy="8" r="3.500" fill="#d9432f" /><circle cx="25" cy="13" r="4" fill="#e4553b" /><circle cx="16" cy="16" r="2.800" fill="#d83a2c" />
          <path d="M20 3l5 5-3 3-4-3zM17 12l4 1-1 5-3-1z" fill="#eef0d8" /><path d="M20 4l3 5" stroke="#b785b8" />
        </Ic>
      </div>
      <div className="ml-[3px] flex">
        <Pinned>
          <Ic w={24} h={23}>
            <path d="M0 7h18v15H0z" fill="#2c2c2c" />
            <path d="M6 1h18v15H6z" fill="#fff" opacity=".8" /><path d="M6 7h12v9H6z" fill="#b9b9b9" />
          </Ic>
        </Pinned>
        <Pinned>
          <Ic w={30} h={26}>
            <circle cx="16" cy="9" r="5" fill="#7b83eb" />
            <path d="M20 10h6v8a6 6 0 0 1-6 4z" fill="#5059c9" /><path d="M10 12h12v8a6 6 0 0 1-12 2z" fill="#7b83eb" />
            <path d="M1 6h14v14H1z" fill="#fff" /><path d="M4.500 9.500h7M8 9.500v7.500" stroke="#4b53bc" strokeWidth="2" />
          </Ic>
          <Badge>1</Badge>
        </Pinned>
        <Pinned run>
          <Ic w={24} h={22}>
            <path d="M0 4h24v17H0z" fill="#ffcf48" /><path d="M0 3h24v4H0z" fill="#ffdb62" />
            <path d="M0 1.500Q0 .5 1 .5h8l1.500 2L9 5H0z" fill="#e0a008" /><rect x="4" y="15" width="15" height="6" rx="1.500" fill="#1480d0" /><path d="M7 19h9v2H7z" fill="#0c5ca0" />
          </Ic>
        </Pinned>
        <Pinned>
          <Ic w={24} h={24}>
            <path d="M6 6V1.500h12V6" fill="none" stroke="#35b6f0" strokeWidth="2" />
            <path d="M.5 5.500h23V21a2.500 2.500 0 0 1-2.500 2.500H3A2.500 2.500 0 0 1 .5 21z" fill="#12508e" />
            <path d="M.5 13h23v8a2.500 2.500 0 0 1-2.500 2.500H3A2.500 2.500 0 0 1 .5 21z" fill="#173c6e" />
            <path d="M7 9.500h4.500V14H7z" fill="#f25022" /><path d="M12.500 9.500H17V14h-4.500z" fill="#7fba00" /><path d="M7 15h4.500v4.500H7z" fill="#00a4ef" /><path d="M12.500 15H17v4.500h-4.500z" fill="#ffb900" />
          </Ic>
        </Pinned>
        <Pinned run>
          <FaWhatsapp size={27} color="#1c8a55" />
          <Badge>3</Badge>
        </Pinned>
        <Pinned>
          <div className="flex h-[24px] w-[24px] items-center justify-center rounded-full bg-[#5865f2]"><FaDiscord size={16} color="#fff" /></div>
        </Pinned>
        <Pinned>
          <Ic w={24} h={24}>
            <defs>
              <linearGradient id="e1" x1="0" y1="0" x2="1" y2=".4"><stop offset="0" stopColor="#1d9fe0" /><stop offset=".6" stopColor="#34c7c4" /><stop offset="1" stopColor="#6fdc4c" /></linearGradient>
              <linearGradient id="e2" x1="0" y1="0" x2="1" y2="1"><stop offset="0" stopColor="#1b8fe0" /><stop offset="1" stopColor="#0c4f9c" /></linearGradient>
            </defs>
            <circle cx="12" cy="12" r="12" fill="url(#e2)" />
            <path d="M0 11.500C.6 5 5.500 0 12 0c7 0 12 5 12 10.500 0 4-2.800 6-6 6-3 0-4.500-1.200-4.500-2 0-.8 1-1 1-3 0-2.500-2.500-4.500-6-4.500C4 7 1 9 0 11.500z" fill="url(#e1)" />
            <path d="M14.500 11.500c0 2-1 2.200-1 3 0 .8 1.500 2 4.500 2 2.500 0 4-1 5-2l.8 1.500-2.300 3.500c-6 2.500-12-.5-12-5.500 0-2 1-3.500 2.500-4.300 1.500.2 2.500 1 2.500 1.800z" fill="#dfe1e8" />
            <path d="M9.800 9.500c-4 2-5.500 6.500-3 10.500 2.500 3.500 8 4 14.500-.5-6 2.500-12 0-12-5 0-2 1-4 2.500-4.500z" fill="#114a8b" />
          </Ic>
        </Pinned>
        <Pinned run>
          <Ic w={24} h={24}>
            <circle cx="12" cy="12" r="12" fill="#fbbc04" />
            <path d="M1.600 6a12 12 0 0 0 10.400 18l5.200-9H6.800z" fill="#34a853" />
            <path d="M1.600 6A12 12 0 0 1 22.400 6H12l-5.200 9z" fill="#ea4335" />
            <circle cx="12" cy="12" r="6" fill="#fff" /><circle cx="12" cy="12" r="4.800" fill="#3b82f0" />
          </Ic>
          <Badge className="bg-[#0b4a3f]">S</Badge>
        </Pinned>
        <Pinned run>
          <Ic w={24} h={24}>
            <path d="M17.500 6.500L2 18.500l-2-2L17.500 0z" fill="#1a8ad6" />
            <path d="M17.500 17.500L2 5.500l-2 2L17.500 24z" fill="#0f6fb8" />
            <path d="M17 0l7 3v18l-7 3z" fill="#2aa6ee" />
          </Ic>
        </Pinned>
        <div className="relative ml-[2px] mt-[5px] flex h-[38px] w-[38px] items-center justify-center rounded-[4px] border border-[#f6ece2] bg-[#f8efe6]">
          <Ic w={24} h={24}>
            <path d="M5 2L3 5 1 21l4 2z" fill="#4a6fb4" />
            <path d="M5 1.500h13l1 17L3.500 20z" fill="#e6eefa" stroke="#6b8bc4" strokeWidth=".7" />
            <path d="M17.500 5.500l5.500.8-1.500 16.200-13.500-1 .5-3 9-.5z" fill="#fff" stroke="#9db1d6" strokeWidth=".7" />
            <text x="5.500" y="14" fontSize="12" fontWeight="bold" fontFamily="Liberation Serif, serif" fill="#234a9c" textLength="12" lengthAdjust="spacingAndGlyphs">W</text>
            <path d="M18.500 9h2.500M18.500 11h2.500M18.500 13H21M11 16h9M11 18h9M10 20h10" stroke="#7d92be" />
          </Ic>
          <div className="absolute bottom-[-1px] left-[10px] h-[3px] w-[16px] rounded-full bg-[#2a7f8f]" />
        </div>
      </div>
      <div className="ml-auto flex items-center">
        <Ic w={10} h={6}><path d="M.5 5.500L5 1l4.500 4.500" fill="none" stroke="#222" strokeWidth="1.200" /></Ic>
        <Ic w={16} h={12} className="ml-[19px]">
          <path d="M4 11a3.300 3.300 0 0 1-.3-6.500A5 5 0 0 1 12 3.500a3.800 3.800 0 0 1 .5 7.500z" fill="#bfc5cc" stroke="#222" strokeWidth="1.200" />
          <path d="M3.500 5c2-1.500 4 0 9 5" fill="none" stroke="#555" />
        </Ic>
        <div className="ml-[18px] flex w-[24px] flex-col items-center text-[11.500px] leading-[16px]">
          <T w={23}>ENG</T>
          <T w={11}>IN</T>
        </div>
        <Ic w={16} h={12} className="ml-[18px]">
          <path d="M.5 4.500a10.500 10.500 0 0 1 15 0M3 7a7 7 0 0 1 10 0M5.300 9.300a4 4 0 0 1 5.400 0" fill="none" stroke="#222" strokeWidth="1.200" /><circle cx="8" cy="11" r="1" fill="#222" />
        </Ic>
        <Ic w={16} h={12} className="ml-[8px]">
          <path d="M.6 4v4h2.500l3.400 3V1L3.100 4zM8.500 4a3 3 0 0 1 0 4M10.500 2.500a5 5 0 0 1 0 7" fill="none" stroke="#222" strokeWidth="1.100" />
          <path d="M12.800 1a7.500 7.500 0 0 1 0 10" fill="none" stroke="#999" />
        </Ic>
        <Ic w={16} h={10} className="ml-[8px]">
          <rect x=".6" y=".6" width="12.800" height="8.800" rx="2" fill="none" stroke="#222" strokeWidth="1.200" /><rect x="2.500" y="2.500" width="7.500" height="5" fill="#111" /><path d="M15 3.500v3" stroke="#222" strokeWidth="1.500" />
        </Ic>
        <div className="ml-[15px] flex w-[57px] flex-col items-end text-[11.500px] leading-[16px]">
          <T w={50}>10:21 PM</T>
          <T w={56}>6/23/2024</T>
        </div>
        <Ic w={14} h={16} className="ml-[8px]"><path d="M7 .5a5 5 0 0 1 5 5v4l1.500 3H.5L2 9.500v-4a5 5 0 0 1 5-5zM5 13.500h4a2 2 0 0 1-4 0z" fill="#134e59" /></Ic>
        <Ic w={24} h={24} className="ml-[17px] mr-[20px]">
          <defs>
            <linearGradient id="c1" x1="0" y1="0" x2="0" y2="1"><stop offset="0" stopColor="#1c7be8" /><stop offset=".5" stopColor="#2fb6c8" /><stop offset="1" stopColor="#f2c52c" /></linearGradient>
            <linearGradient id="c2" x1="0" y1="0" x2="0" y2="1"><stop offset="0" stopColor="#a45ae8" /><stop offset="1" stopColor="#f26a7c" /></linearGradient>
          </defs>
          <path d="M8 1h7c2 0 2.500 1 3 3l1 3h-5l-3 8c-.8 2-2 3-4 3H4c-3 0-4-2-3.200-5L4 4c.6-2 2-3 4-3z" fill="url(#c1)" />
          <path d="M18 6.500h2c3 0 4 2 3.300 5L21 18H8c2-.3 2.700-1.500 3.200-3L14 8c.5-1 1-1.500 4-1.500z" fill="url(#c2)" opacity=".95" />
          <path d="M14 7h3.500l-3 8.500H11z" fill="#f5e6f4" />
          <rect x="6" y="15.500" width="18" height="8" rx="1.500" fill="#f5b91c" />
          <text x="8" y="22" fontSize="7" fontWeight="bold" fontFamily="Noto Sans, sans-serif" fill="#222" textLength="14">PRE</text>
        </Ic>
      </div>
    </div>
  );
}

export default function App() {
  return (
    <div className="relative flex h-[768px] w-[1366px] flex-col overflow-hidden bg-[#bfdbff] font-['Noto_Sans','Open_Sans',sans-serif] text-[#15428b]">
      <Orb />
      <TitleBar />
      <Tabs />
      <div className="mx-[1px] flex h-[91px] shrink-0 gap-[3px] rounded-[4px] border border-b-2 border-[#8db2e3] border-b-[#b5eafa] bg-gradient-to-b from-[#dce9f7] via-[#cbdcf0] via-30% to-[#e4f0fb] pl-[2px] pt-[2px]">
        <Clipboard />
        <FontGroup />
        <Paragraph />
        <StylesGroup />
        <Editing />
      </div>
      <div className="h-[2px] shrink-0 bg-[#85a8d8]" />
      <div className="flex h-[556px] shrink-0 overflow-hidden bg-[linear-gradient(180deg,#a3c2ea_0%,#7e9fd0_35%,#567db1_72%,#6792d0_100%)]">
        <Thumbnails />
        <div className="w-[6px] shrink-0 border-l border-r border-l-[#4f7ab5] border-r-[#6c94cc] bg-[#b3d2ff]" />
        <DocArea />
        <VScroll />
      </div>
      <StatusBar />
      <Taskbar />
    </div>
  );
}
